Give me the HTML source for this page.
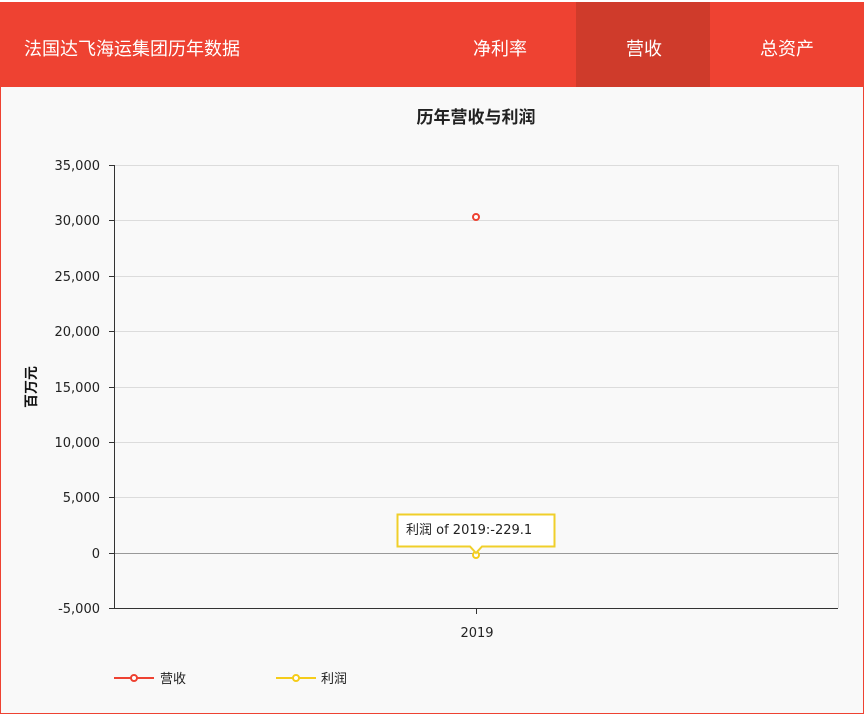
<!DOCTYPE html>
<html><head><meta charset="utf-8"><style>
body{margin:0;width:864px;height:715px;overflow:hidden;background:#fff;font-family:"Liberation Sans","Noto Sans CJK SC",sans-serif}
.wrap{position:absolute;left:0;top:2px;width:862px;height:711px;border:1px solid #ee4232;border-top:none;background:#f9f9f9}
.hdr{position:absolute;left:0;top:2px;width:864px;height:85px;background:#ee4232;color:#fff;font-size:18px}
.hdr span{position:absolute;top:33px}
.act{position:absolute;left:576px;top:0;width:134px;height:85px;background:#cf3b2b}
</style></head><body>
<div class="wrap"></div>
<div class="hdr"><div class="act"></div>
<span style="left:24px">法国达飞海运集团历年数据</span>
<span style="left:473px">净利率</span>
<span style="left:626px">营收</span>
<span style="left:760px">总资产</span>
</div>
<svg style="position:absolute;left:0;top:0" width="864" height="715" font-family="DejaVu Sans,Noto Sans CJK SC,sans-serif">
<text x="476" y="123" text-anchor="middle" font-size="17" font-weight="bold" fill="#222">历年营收与利润</text>
<g stroke="#dcdcdc" stroke-width="1">
<line x1="114" x2="838" y1="165.5" y2="165.5"/><line x1="114" x2="838" y1="220.5" y2="220.5"/>
<line x1="114" x2="838" y1="276.5" y2="276.5"/><line x1="114" x2="838" y1="331.5" y2="331.5"/>
<line x1="114" x2="838" y1="387.5" y2="387.5"/><line x1="114" x2="838" y1="442.5" y2="442.5"/>
<line x1="114" x2="838" y1="497.5" y2="497.5"/><line x1="838.5" x2="838.5" y1="165" y2="608"/>
</g>
<line x1="114" x2="838" y1="553.5" y2="553.5" stroke="#999"/>
<line x1="114" x2="838" y1="608.5" y2="608.5" stroke="#333"/>
<line x1="114.5" x2="114.5" y1="165" y2="608" stroke="#333"/>
<g stroke="#333"><line x1="109" x2="114" y1="165.5" y2="165.5"/><line x1="109" x2="114" y1="220.5" y2="220.5"/><line x1="109" x2="114" y1="276.5" y2="276.5"/><line x1="109" x2="114" y1="331.5" y2="331.5"/><line x1="109" x2="114" y1="387.5" y2="387.5"/><line x1="109" x2="114" y1="442.5" y2="442.5"/><line x1="109" x2="114" y1="497.5" y2="497.5"/><line x1="109" x2="114" y1="553.5" y2="553.5"/><line x1="109" x2="114" y1="608.5" y2="608.5"/><line x1="476.5" x2="476.5" y1="608" y2="614"/></g>
<g font-size="13" fill="#222" text-anchor="end">
<text x="100" y="170">35,000</text><text x="100" y="225">30,000</text><text x="100" y="281">25,000</text><text x="100" y="336">20,000</text><text x="100" y="392">15,000</text><text x="100" y="447">10,000</text><text x="100" y="502">5,000</text><text x="100" y="558">0</text><text x="100" y="613">-5,000</text>
</g>
<text x="477" y="637" font-size="13" text-anchor="middle" fill="#222">2019</text>
<text transform="translate(36,387) rotate(-90)" font-size="14" font-weight="bold" text-anchor="middle" fill="#111">百万元</text>
<circle cx="476" cy="217" r="3" fill="#fff" stroke="#ee4232" stroke-width="2"/>
<circle cx="476" cy="555" r="3" fill="#fff" stroke="#f5cc1a" stroke-width="2"/>
<path d="M397.5,514.5 H554.5 V546.5 H482 L476,553 L470,546.5 H397.5 Z" fill="#fff" stroke="#f0cf2a" stroke-width="2"/>
<text x="406" y="534" font-size="13" fill="#222">利润 of 2019:-229.1</text>
<line x1="114" x2="154" y1="678" y2="678" stroke="#ee4232" stroke-width="2"/><circle cx="134" cy="678" r="3" fill="#fff" stroke="#ee4232" stroke-width="2"/>
<text x="160" y="683" font-size="13" fill="#222">营收</text>
<line x1="276" x2="316" y1="678" y2="678" stroke="#f5cc1a" stroke-width="2"/><circle cx="296" cy="678" r="3" fill="#fff" stroke="#f5cc1a" stroke-width="2"/>
<text x="321" y="683" font-size="13" fill="#222">利润</text>
</svg>
</body></html>
